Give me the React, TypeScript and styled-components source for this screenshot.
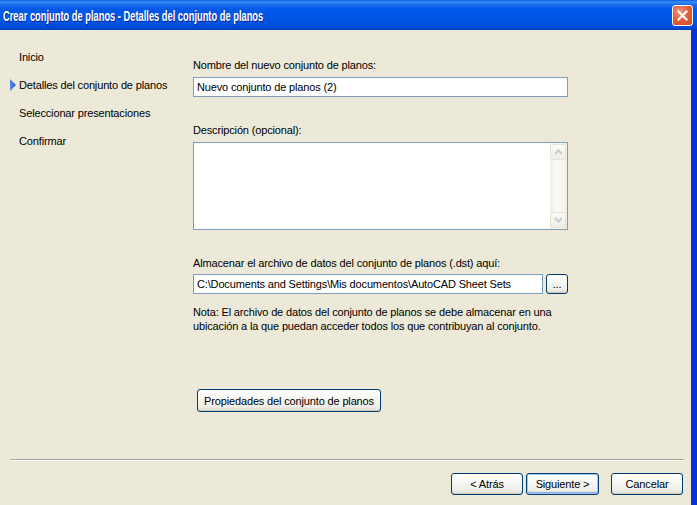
import React from "react";
import styled, { createGlobalStyle } from "styled-components";

const Global = createGlobalStyle`
  html, body { margin: 0; padding: 0; background: #ECE9D8; }
  * { box-sizing: border-box; }
`;

const Window = styled.div`
  width: 697px;
  height: 505px;
  display: flex;
  flex-direction: column;
  overflow: hidden;
  font-family: "Liberation Sans", Arial, sans-serif;
  font-size: 11px;
  letter-spacing: -0.15px;
  color: #000;
`;

const TitleBar = styled.div`
  height: 30px;
  flex: none;
  display: flex;
  align-items: center;
  justify-content: space-between;
  padding: 0 4px 0 3px;
  background: linear-gradient(180deg, #0A5FE6 0%, #3C8DF6 7%, #1A6BEE 15%, #0058E8 32%, #0055E5 70%, #004CD8 88%, #003FC0 100%);
`;

const TitleText = styled.span`
  font-family: "Liberation Sans", sans-serif;
  font-weight: bold;
  font-size: 14px;
  letter-spacing: 0;
  color: #fff;
  text-shadow: 1px 1px 0 #0A1E8C;
  padding-top: 1px;
  white-space: nowrap;
  transform: scaleX(0.665);
  transform-origin: left center;
`;

const CloseButton = styled.div`
  width: 21px;
  height: 21px;
  border: 1px solid #fff;
  border-radius: 3px;
  background: radial-gradient(circle at 35% 30%, #F19A80 0%, #E3603B 45%, #D14A24 100%);
  display: flex;
  align-items: center;
  justify-content: center;
`;

const Body = styled.div`
  flex: 1;
  display: flex;
  flex-direction: column;
  background: #ECE9D8;
  border-right: 5px solid #0831D9;
  box-shadow: inset -1px 0 0 #0F35C8;
`;

const Content = styled.div`
  flex: 1;
  display: flex;
`;

const Nav = styled.div`
  width: 193px;
  flex: none;
  padding: 13px 0 0 10px;
  display: flex;
  flex-direction: column;
`;

const NavItem = styled.div`
  height: 28px;
  display: flex;
  align-items: center;
  white-space: nowrap;
`;

const ArrowSlot = styled.span`
  width: 9px;
  flex: none;
  display: flex;
  align-items: center;
`;

const Main = styled.div`
  flex: 1;
  padding-top: 28px;
  padding-right: 124px;
  display: flex;
  flex-direction: column;
`;

const Label = styled.div<{ $gap: number }>`
  line-height: 14px;
  margin-top: ${(p) => p.$gap}px;
  white-space: nowrap;
`;

const TextInput = styled.div<{ $gap: number; $grow?: boolean }>`
  height: 20px;
  margin-top: ${(p) => p.$gap}px;
  border: 1px solid #7F9DB9;
  background: #fff;
  display: flex;
  align-items: center;
  padding-left: 3px;
  white-space: nowrap;
  overflow: hidden;
  flex: ${(p) => (p.$grow ? "1" : "none")};
`;

const TextArea = styled.div`
  height: 88px;
  margin-top: 5px;
  border: 1px solid #7F9DB9;
  background: #fff;
  display: flex;
  justify-content: flex-end;
`;

const ScrollBar = styled.div`
  width: 17px;
  padding: 1px 1px 1px 0;
  display: flex;
  flex-direction: column;
  justify-content: space-between;
  background: linear-gradient(90deg, #F0EFE8 0%, #FBFBF8 40%, #F6F5EF 80%, #EEEDE5 100%);
`;

const ScrollButton = styled.div`
  height: 16px;
  border: 1px solid #E6E4D9;
  border-radius: 2px;
  background: linear-gradient(180deg, #FAFAF7 0%, #EFEEE7 100%);
  display: flex;
  align-items: center;
  justify-content: center;
`;

const PathRow = styled.div`
  display: flex;
  margin-top: 4px;
  gap: 3px;
`;

const Note = styled.div`
  margin-top: 11px;
  line-height: 14px;
`;

const XPButton = styled.div<{ $w: number; $h?: number; $default?: boolean }>`
  width: ${(p) => p.$w}px;
  height: ${(p) => p.$h ?? 22}px;
  flex: none;
  border: 1px solid #003C74;
  border-radius: 3px;
  background: linear-gradient(180deg, #FFFFFF 0%, #F7F7F4 40%, #EEEDE7 80%, #DCD8CC 100%);
  display: flex;
  align-items: center;
  justify-content: center;
  white-space: nowrap;
  box-shadow: ${(p) =>
    p.$default ? "inset 0 0 0 1px #A9C4F0, inset 0 -1px 0 1px #8AAAE4" : "inset 0 -1px 0 #D0CBBD"};
`;

const PropsRow = styled.div`
  margin-top: 56px;
  padding-left: 4px;
  display: flex;
`;

const Footer = styled.div`
  flex: none;
  display: flex;
  flex-direction: column;
  padding-bottom: 10px;
`;

const Separator = styled.div`
  margin: 0 8px 0 10px;
  height: 2px;
  border-top: 1px solid #ACA899;
  border-bottom: 1px solid #FFFFFF;
`;

const ButtonRow = styled.div`
  margin-top: 12px;
  display: flex;
  justify-content: flex-end;
  padding-right: 9px;
  gap: 3px;
`;

const Spacer = styled.div`
  width: 6px;
`;

const NavArrow = () => (
  <svg width="6" height="12" viewBox="0 0 6 12">
    <defs>
      <linearGradient id="na" x1="0" y1="0" x2="1" y2="0">
        <stop offset="0" stopColor="#5B8DE0" />
        <stop offset="1" stopColor="#2458C8" />
      </linearGradient>
    </defs>
    <polygon points="0,0 6,6 0,12" fill="url(#na)" />
  </svg>
);

const Chevron = ({ up }: { up?: boolean }) => (
  <svg width="9" height="6" viewBox="0 0 9 6">
    <polyline
      points={up ? "1,5 4.5,1.5 8,5" : "1,1 4.5,4.5 8,1"}
      fill="none"
      stroke="#C9CCD6"
      strokeWidth="2"
    />
  </svg>
);

const steps = [
  "Inicio",
  "Detalles del conjunto de planos",
  "Seleccionar presentaciones",
  "Confirmar",
];

export default function App() {
  return (
    <>
      <Global />
      <Window>
        <TitleBar>
          <TitleText>Crear conjunto de planos - Detalles del conjunto de planos</TitleText>
          <CloseButton>
            <svg width="11" height="11" viewBox="0 0 11 11">
              <path d="M1.5 1.5 L9.5 9.5 M9.5 1.5 L1.5 9.5" stroke="#fff" strokeWidth="2" strokeLinecap="square" />
            </svg>
          </CloseButton>
        </TitleBar>
        <Body>
          <Content>
            <Nav>
              {steps.map((s, i) => (
                <NavItem key={s}>
                  <ArrowSlot>{i === 1 && <NavArrow />}</ArrowSlot>
                  {s}
                </NavItem>
              ))}
            </Nav>
            <Main>
              <Label $gap={0}>Nombre del nuevo conjunto de planos:</Label>
              <TextInput $gap={5}>Nuevo conjunto de planos (2)</TextInput>
              <Label $gap={26}>Descripción (opcional):</Label>
              <TextArea>
                <ScrollBar>
                  <ScrollButton><Chevron up /></ScrollButton>
                  <ScrollButton><Chevron /></ScrollButton>
                </ScrollBar>
              </TextArea>
              <Label $gap={26}>Almacenar el archivo de datos del conjunto de planos (.dst) aquí:</Label>
              <PathRow>
                <TextInput $gap={0} $grow>C:\Documents and Settings\Mis documentos\AutoCAD Sheet Sets</TextInput>
                <XPButton $w={22} $h={20}>...</XPButton>
              </PathRow>
              <Note>
                Nota: El archivo de datos del conjunto de planos se debe almacenar en una
                <br />
                ubicación a la que puedan acceder todos los que contribuyan al conjunto.
              </Note>
              <PropsRow>
                <XPButton $w={184} $h={23}>Propiedades del conjunto de planos</XPButton>
              </PropsRow>
            </Main>
          </Content>
          <Footer>
            <Separator />
            <ButtonRow>
              <XPButton $w={72}>&lt; Atrás</XPButton>
              <XPButton $w={73} $default>Siguiente &gt;</XPButton>
              <Spacer />
              <XPButton $w={72}>Cancelar</XPButton>
            </ButtonRow>
          </Footer>
        </Body>
      </Window>
    </>
  );
}
